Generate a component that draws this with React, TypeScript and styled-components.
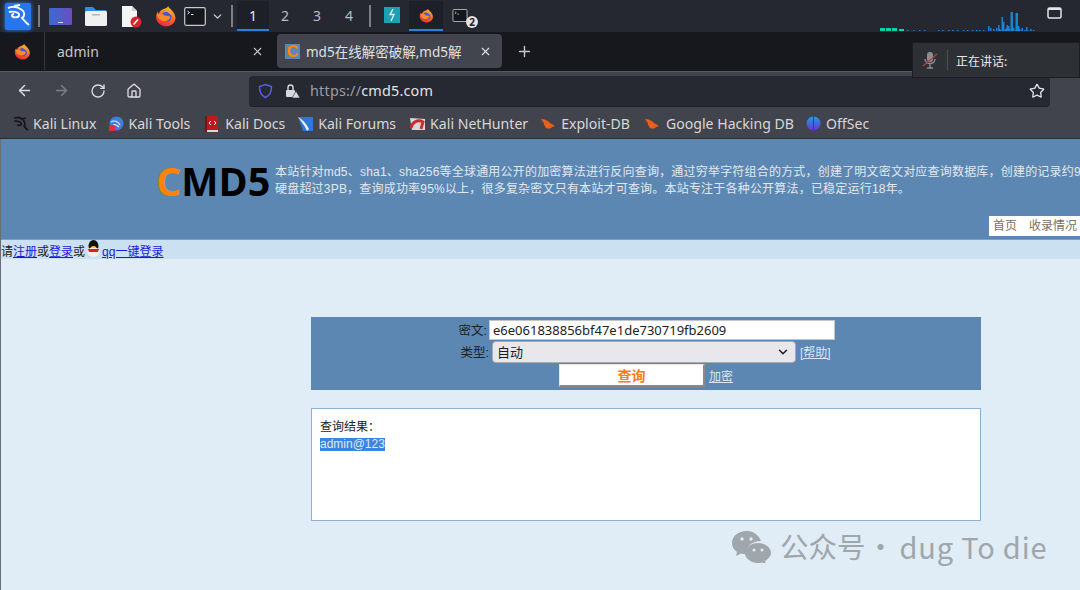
import React from 'react'
import styled, { createGlobalStyle } from 'styled-components'
import { ArrowLeft, ArrowRight, RotateCw, Home, Star, Plus, X, ChevronDown } from 'lucide-react'

const GlobalStyle = createGlobalStyle`
  html, body {
    margin: 0;
    padding: 0;
    width: 1080px;
    height: 590px;
    overflow: hidden;
    background: #e1edf6;
  }
  * { box-sizing: border-box; }
`

const cjk = `"Noto Sans CJK SC", sans-serif`
const ui = `"Noto Sans", "Noto Sans CJK SC", sans-serif`
const web = `"Liberation Sans", "Noto Sans CJK SC", sans-serif`

const introFirst =
  '本站针对md5、sha1、sha256等全球通用公开的加密算法进行反向查询\uFF0C通过穷举字符组合的方式\uFF0C创建了明文密文对应查询数据库\uFF0C创建的记录约9'
const introSecond =
  '硬盘超过3PB\uFF0C查询成功率95%以上\uFF0C很多复杂密文只有本站才可查询。本站专注于各种公开算法\uFF0C已稳定运行18年。'
const resultLabel = '查询结果\uFF1A'

const Screen = styled.div`
  position: relative;
  width: 1080px;
  height: 590px;
  overflow: hidden;
  display: flex;
  flex-direction: column;
`

// desktop panel
const Panel = styled.div`
  height: 32px;
  flex: none;
  background: #252831;
  display: flex;
  align-items: center;
  padding-left: 5px;
  color: #c9ccd2;
  font-family: ${ui};
`
const KaliLogo = styled.svg`
  flex: none;
  filter: drop-shadow(0 0 2px #2b7cf0);
`
const Sep = styled.div<{ $l: number; $r: number }>`
  width: 2px;
  height: 22px;
  background: #7b7e84;
  margin: 0 ${(p) => p.$r}px 0 ${(p) => p.$l}px;
  flex: none;
`
const Launcher = styled.div<{ $ml: number }>`
  margin-left: ${(p) => p.$ml}px;
  display: flex;
  align-items: center;
  flex: none;
`
const Workspace = styled.div<{ $active?: boolean }>`
  width: 32px;
  height: 30px;
  display: flex;
  align-items: center;
  justify-content: center;
  font-size: 14px;
  flex: none;
  color: ${(p) => (p.$active ? '#e6e8ec' : '#b9bcc3')};
  background: ${(p) => (p.$active ? '#1d2029' : 'transparent')};
  border-bottom: 2px solid ${(p) => (p.$active ? '#2f7fe0' : 'transparent')};
`
const WindowSlot = styled.div<{ $active?: boolean }>`
  position: relative;
  width: 34px;
  height: 30px;
  display: flex;
  align-items: center;
  justify-content: center;
  flex: none;
  background: ${(p) => (p.$active ? '#1d2029' : 'transparent')};
  border-bottom: 2px solid ${(p) => (p.$active ? '#2f7fe0' : 'transparent')};
`
const CountBadge = styled.span`
  position: absolute;
  right: -1px;
  bottom: 1px;
  width: 12px;
  height: 12px;
  border-radius: 50%;
  background: #e4e4e4;
  color: #20232b;
  font: bold 10px/12px ${ui};
  text-align: center;
`
const PanelRight = styled.div`
  margin-left: auto;
  display: flex;
  align-items: flex-start;
  height: 32px;
  padding-right: 18px;
  gap: 12px;
`
const Graph = styled.svg`
  margin-top: 11px;
  flex: none;
`
const ScreenIcon = styled.svg`
  margin-top: 7px;
  flex: none;
`

// browser tabs
const TabBar = styled.div`
  height: 39px;
  flex: none;
  background: #17181d;
  display: flex;
  align-items: center;
  padding-bottom: 1px;
  color: #c4c6cb;
  font-family: ${ui};
  font-size: 14px;
`
const FoxSlot = styled.div`
  width: 45px;
  height: 38px;
  display: flex;
  align-items: center;
  justify-content: center;
  border-right: 1px solid #33353b;
  flex: none;
`
const PlainTab = styled.div`
  width: 225px;
  height: 34px;
  padding: 0 6px 0 12px;
  display: flex;
  align-items: center;
  justify-content: space-between;
  flex: none;
`
const ActiveTab = styled(PlainTab)`
  margin-left: 7px;
  padding: 0 10px 0 8px;
  background: #42454e;
  border-radius: 4px;
  color: #dfe0e3;
  font-size: 13.5px;
`
const TabTitle = styled.span`
  flex: 1;
  margin-left: 6px;
  white-space: nowrap;
  overflow: hidden;
`
const Favicon = styled.span`
  width: 15px;
  height: 15px;
  background: #5b87b2;
  color: #ff8200;
  font: bold 16px/15px ${web};
  text-align: center;
  flex: none;
`
const NewTab = styled.div`
  margin-left: 14px;
  display: flex;
`

// toolbar
const NavBar = styled.div`
  height: 38px;
  flex: none;
  background: #41444d;
  border-top: 1px solid #55585f;
  display: flex;
  align-items: center;
  padding-left: 16px;
  color: #dcdde0;
`
const NavButton = styled.div<{ $w?: number }>`
  width: ${(p) => p.$w ?? 37}px;
  display: flex;
  flex: none;
`
const UrlBar = styled.div`
  width: 801px;
  height: 30px;
  margin-left: 88px;
  background: #262932;
  border-radius: 4px;
  box-shadow: 0 1px 0 #1f2127;
  display: flex;
  align-items: center;
  padding: 0 5px 0 9px;
  font-family: ${ui};
  font-size: 14.4px;
  color: #e2e3e6;
`
const Scheme = styled.span`
  color: #9b9da3;
`
const UrlText = styled.span`
  flex: 1;
  margin-left: 10px;
  letter-spacing: 0.2px;
`
const LockWrap = styled.span`
  margin-left: 11px;
  display: flex;
`

// bookmarks
const Bookmarks = styled.div`
  height: 30px;
  flex: none;
  background: #41444d;
  border-bottom: 1px solid #2a2c32;
  display: flex;
  align-items: center;
  padding-left: 13px;
  gap: 12px;
  color: #d6d7da;
  font-family: ${ui};
  font-size: 14.1px;
`
const Bookmark = styled.div<{ $gap?: number; $ml?: number }>`
  display: flex;
  align-items: center;
  gap: ${(p) => p.$gap ?? 4}px;
  margin-left: ${(p) => p.$ml ?? 0}px;
  white-space: nowrap;
`

// cmd5 page
const Page = styled.div`
  flex: 1;
  background: #e1edf6;
  border-left: 1px solid #6b6e74;
  font-family: ${web};
  font-size: 12px;
  color: #222;
  min-height: 0;
`
const Header = styled.div`
  height: 101px;
  background: #5b87b2;
  border-bottom: 1px solid #76a0c8;
  padding: 25px 0 0 155px;
  position: relative;
  overflow: hidden;
`
const Brand = styled.div`
  display: flex;
  align-items: flex-start;
`
const Logo = styled.div`
  font: bold 39.5px/38px "Open Sans", "Liberation Sans", sans-serif;
  color: #000;
  width: 119px;
  flex: none;
  margin-top: -2px;
  white-space: nowrap;
`
const LogoC = styled.span`
  color: #ff8200;
`
const Intro = styled.div`
  color: #e3e8ef;
  font-size: 12px;
  letter-spacing: 0.2px;
  line-height: 16.5px;
  white-space: nowrap;
`
const HeaderNav = styled.div`
  position: absolute;
  right: 0;
  top: 77px;
  width: 91px;
  height: 20px;
  background: #fff;
  color: #7a705f;
  font-size: 12px;
  line-height: 20px;
  padding-left: 4px;
  white-space: nowrap;
  overflow: hidden;
  display: flex;
  gap: 12px;
`
const LoginBar = styled.div`
  height: 19px;
  background: #cbe0f0;
  display: flex;
  align-items: flex-end;
  line-height: 14px;
  white-space: nowrap;
  position: relative;
`
const PageLink = styled.a`
  color: #1a1add;
  text-decoration: underline;
`
const Penguin = styled.svg`
  flex: none;
  margin: 0 1px 1px;
`
const Main = styled.div`
  margin: 58px 0 0 310px;
  width: 670px;
`
const QueryForm = styled.div`
  height: 73px;
  background: #5b87b2;
  padding-top: 2px;
  display: grid;
  grid-template-columns: 178px auto 1fr;
  grid-template-rows: 21px 23px 24px;
  align-items: center;
`
const FieldLabel = styled.div<{ $pr: number }>`
  text-align: right;
  padding-right: ${(p) => p.$pr}px;
  color: #1c1f24;
  font-size: 12.5px;
`
const HashInput = styled.input`
  width: 346px;
  height: 20px;
  border: 1px solid #c4c4c8;
  background: #fff;
  padding: 0 3px;
  font: 13px ${ui};
  color: #222;
  outline: none;
`
const TypeRow = styled.div`
  grid-column: 2 / 4;
  display: flex;
  align-items: center;
  padding-left: 3px;
`
const TypeSelect = styled.div`
  width: 304px;
  height: 22px;
  border: 1px solid #a9a9ae;
  border-radius: 4px;
  background: #e7e7ec;
  color: #1d1d1f;
  display: flex;
  align-items: center;
  justify-content: space-between;
  padding: 0 5px 0 4px;
  font: 13px ${cjk};
  flex: none;
`
const LightLink = styled.a`
  color: #dbe6f2;
  text-decoration: underline;
  margin-left: 4px;
  font-size: 12px;
`
const SubmitRow = styled.div`
  grid-column: 1 / 4;
  display: flex;
  align-items: center;
  padding-left: 248px;
`
const Submit = styled.div`
  width: 146px;
  height: 23px;
  background: #fff;
  border-style: solid;
  border-width: 1px 2px 2px 1px;
  border-color: #e8e8e8 #8a8a8a #8a8a8a #e8e8e8;
  color: #ff7a14;
  font: bold 14px/20px ${cjk};
  text-align: center;
`
const Result = styled.div`
  margin-top: 18px;
  height: 113px;
  background: #fff;
  border: 1px solid #8fb0d3;
  padding: 10px 8px;
  line-height: 17px;
  font-size: 12px;
`
const Selected = styled.span`
  background: #3b84e0;
  color: #dfeafa;
  display: inline-block;
  line-height: 13px;
  font-size: 12px;
`

// overlays
const Speaking = styled.div`
  position: absolute;
  left: 912px;
  top: 42px;
  width: 168px;
  height: 36px;
  background: #2d3035;
  border: 1px solid #1c1e23;
  display: flex;
  align-items: center;
  padding-left: 9px;
  color: #e6e6e8;
  font: 12px ${cjk};
`
const SpeakDivider = styled.div`
  width: 1px;
  height: 20px;
  background: #4a4d54;
  margin: 0 8px 0 9px;
`
const Watermark = styled.div`
  position: absolute;
  left: 731px;
  top: 528px;
  display: flex;
  align-items: center;
  gap: 8px;
  color: #9fa6ac;
  font: 28.5px/36px ${cjk};
  white-space: nowrap;
`
const WatermarkDot = styled.span`
  width: 30px;
  margin-left: -8px;
  margin-right: -4px;
  text-align: center;
`
const WatermarkName = styled.span`
  font-size: 29px;
  letter-spacing: 0.8px;
`

const FoxIcon = ({ size = 20 }: { size?: number }) => (
  <svg width={size} height={size} viewBox="0 0 20 20">
    <defs>
      <linearGradient id="fox" x1="0.7" y1="0" x2="0.3" y2="1">
        <stop offset="0" stopColor="#ffc02e" />
        <stop offset="0.5" stopColor="#ff6a2a" />
        <stop offset="1" stopColor="#e4263c" />
      </linearGradient>
    </defs>
    <path
      d="M12 1c0 1.500 1.500 2 3 3.500 3 3 4 6 3.500 8.500-.8 4-4.500 6.500-8.500 6.500C5 19.500 1 15.500 1 11c0-2 .5-3.500 1.500-5 0 1 .5 1.500 1 2 1-3 3-4 5-4.500C10 3 11.500 2.500 12 1z"
      fill="url(#fox)"
    />
    <circle cx="10.500" cy="10.500" r="4.700" fill="#4c55d8" />
    <path d="M2 9c2.500-2 5-1.500 6.500.5 2 .5 4.500 0 5.500 1.500-1 3-4 4.500-7 3.500C5 14 3 12 2 9z" fill="#ff8a26" />
    <path d="M9 5c3-.5 6 1.500 6.500 5-1.500-2-4-3.500-6.500-5z" fill="#ffa82e" />
  </svg>
)

const Terminal = ({ w, h }: { w: number; h: number }) => (
  <svg width={w} height={h} viewBox="0 0 22 19">
    <rect x=".7" y=".7" width="20.600" height="17.600" rx="1.500" fill="#15171c" stroke="#c9cbd0" strokeWidth="1.200" />
    <path d="M3.500 4l2 1.500-2 1.500M7 7.500h2.500" stroke="#e8e8e8" strokeWidth="1" fill="none" />
  </svg>
)

const Flame = () => (
  <svg width="16" height="12" viewBox="0 0 16 12">
    <path d="M1 1c4 0 7 2 9 4l5 3-3 1c-2 2-4 2-6 1C5 8 3 6 4 5 3 4 2 3 1 1z" fill="#e8601c" />
  </svg>
)

// net monitor bars: [x, height]
const teal: [number, number][] = [[0, 3], [6, 3], [12, 3], [19, 2]]
const blue: [number, number][] = [
  [27, 1], [33, 1], [39, 1], [44, 1], [58, 1], [62, 1], [68, 1], [72, 1], [77, 1], [83, 1], [87, 1], [92, 1],
  [96, 1], [99, 1], [103, 1], [108, 5], [110, 3], [113, 2], [116, 3], [119, 2], [123, 2], [126, 3], [129, 2],
  [132, 1], [135, 1], [139, 2], [141, 1], [144, 1], [147, 1], [150, 1], [153, 1],
  [118, 6], [122, 3], [125, 2], [119.500, 1],
  [130.500, 19], [131.500, 19], [135.500, 18], [136.500, 18],
  [121.500, 14], [123, 9], [126.500, 6], [128, 5], [133, 3], [138, 5], [141.500, 3], [146, 4], [150, 2],
]

export default function App() {
  return (
    <Screen>
      <GlobalStyle />
      <Panel>
        <KaliLogo width="26" height="27" viewBox="0 0 26 27">
          <rect width="26" height="27" rx="2" fill="#2876ee" />
          <path
            d="M3 5c5-2 10-1 14 2 3 2 3 6 0 8 2 2 4 5 7 7M4 9c4-1 9 0 10 2 1 3-3 4-6 3-2-1-1-3 1-3M9 3l6-1"
            stroke="#fff"
            strokeWidth="1.900"
            fill="none"
          />
        </KaliLogo>
        <Sep $l={7} $r={0} />
        <Launcher $ml={9}>
          <svg width="23" height="17" viewBox="0 0 23 17">
            <defs>
              <linearGradient id="desk" x1="0" y1="0" x2="1" y2="0">
                <stop offset="0" stopColor="#3a6bd0" />
                <stop offset="1" stopColor="#6a4fc0" />
              </linearGradient>
            </defs>
            <rect width="23" height="17" rx="1" fill="url(#desk)" />
            <rect x="9" y="14" width="5" height="1" fill="#cfd4ea" />
          </svg>
        </Launcher>
        <Launcher $ml={12}>
          <svg width="24" height="21" viewBox="0 0 24 21">
            <path d="M1 2a1 1 0 011-1h7l3 3h9a2 2 0 012 2H1z" fill="#2f8fe8" />
            <rect x="1" y="5" width="22" height="15" rx="1.500" fill="#f0f0f0" />
            <rect x="8" y="8" width="8" height="1.500" fill="#b5b5b5" />
          </svg>
        </Launcher>
        <Launcher $ml={13}>
          <svg width="21" height="23" viewBox="0 0 21 23">
            <path d="M1 1h10l5 5v16H1z" fill="#f4f4f4" />
            <path d="M11 1l5 5h-5z" fill="#cfcfcf" />
            <circle cx="15" cy="17" r="5.500" fill="#d8232a" />
            <path d="M12.500 19.500l4.500-5" stroke="#fff" strokeWidth="1.700" />
          </svg>
        </Launcher>
        <Launcher $ml={13}>
          <FoxIcon size={22} />
        </Launcher>
        <Launcher $ml={7}>
          <Terminal w={22} h={19} />
        </Launcher>
        <Launcher $ml={5}>
          <ChevronDown size={13} strokeWidth={2.500} />
        </Launcher>
        <Sep $l={7} $r={4} />
        <Workspace $active>1</Workspace>
        <Workspace>2</Workspace>
        <Workspace>3</Workspace>
        <Workspace>4</Workspace>
        <Sep $l={4} $r={4} />
        <WindowSlot>
          <svg width="16" height="16" viewBox="0 0 16 16">
            <rect width="16" height="16" fill="#1ba0b4" />
            <path d="M9 2L6 7.500h4L7 14" stroke="#e8f6f6" strokeWidth="1.300" fill="none" />
          </svg>
        </WindowSlot>
        <WindowSlot $active>
          <FoxIcon size={15} />
        </WindowSlot>
        <WindowSlot>
          <Terminal w={16} h={13} />
          <CountBadge>2</CountBadge>
        </WindowSlot>
        <PanelRight>
          <Graph width="155" height="20" viewBox="0 0 155 20">
            {teal.map(([x, h]) => (
              <rect key={x} x={x} y={20 - h} width="5" height={h} fill="#00d6b0" />
            ))}
            {blue.map(([x, h]) => (
              <rect key={x} x={x} y={20 - h} width="1.500" height={h} fill={h > 10 ? '#1a86c8' : '#1b7fe0'} />
            ))}
          </Graph>
          <ScreenIcon width="15" height="13" viewBox="0 0 15 13">
            <rect x="1" y="1" width="13" height="10" rx="1.500" fill="#262932" stroke="#e4e4e4" strokeWidth="1.500" />
            <rect x="1" y="1" width="13" height="2" fill="#e4e4e4" />
          </ScreenIcon>
        </PanelRight>
      </Panel>

      <TabBar>
        <FoxSlot>
          <FoxIcon size={17} />
        </FoxSlot>
        <PlainTab>
          admin
          <X size={13} />
        </PlainTab>
        <ActiveTab>
          <Favicon>C</Favicon>
          <TabTitle>md5在线解密破解,md5解</TabTitle>
          <X size={13} />
        </ActiveTab>
        <NewTab>
          <Plus size={17} />
        </NewTab>
      </TabBar>

      <NavBar>
        <NavButton><ArrowLeft size={17} /></NavButton>
        <NavButton><ArrowRight size={17} color="#7d7f85" /></NavButton>
        <NavButton $w={36}><RotateCw size={16} /></NavButton>
        <NavButton $w={35}><Home size={16} /></NavButton>
        <UrlBar>
          <svg width="15" height="16" viewBox="0 0 15 16" fill="none" style={{ flex: 'none' }}>
            <path d="M7.500 1.500l6 2c0 5-1 9-6 11-5-2-6-6-6-11z" stroke="#5a5fe0" strokeWidth="1.400" />
          </svg>
          <LockWrap>
            <svg width="16" height="16" viewBox="0 0 16 16" fill="none">
              <rect x="2" y="7" width="9" height="7" rx="1" fill="#d8d9dc" />
              <path d="M4 7V4.500a2.500 2.500 0 015 0V7" stroke="#d8d9dc" strokeWidth="1.400" />
              <path d="M12 8l4 7H8z" fill="#d8d9dc" stroke="#262932" strokeWidth=".6" />
            </svg>
          </LockWrap>
          <UrlText><Scheme>https://</Scheme>cmd5.com</UrlText>
          <Star size={16} />
        </UrlBar>
      </NavBar>

      <Bookmarks>
        <Bookmark>
          <svg width="16" height="16" viewBox="0 0 16 16" fill="none">
            <path d="M1 2c4-1 8 0 10 3 1 2 1 4 0 5 1 1 2 3 4 4M1 5c3 0 6 0 7 2 1 2-1 3-4 2M9 3l4-1" stroke="#141519" strokeWidth="1.700" />
          </svg>
          Kali Linux
        </Bookmark>
        <Bookmark>
          <svg width="16" height="16" viewBox="0 0 16 16">
            <circle cx="8.500" cy="7.500" r="7" fill="#3f7fd8" />
            <path d="M3 6c3-2 7-1 9 3M5 9c2-1 4 0 6 2" stroke="#e8edf6" strokeWidth="1.200" fill="none" />
            <rect x="1" y="9" width="6" height="6" rx="1.500" fill="#e03030" />
          </svg>
          Kali Tools
        </Bookmark>
        <Bookmark $gap={6} $ml={3}>
          <svg width="14" height="16" viewBox="0 0 14 16">
            <rect x="1" y="0" width="12" height="14" fill="#b81c22" />
            <rect x="1" y="14" width="12" height="2" fill="#d8d8d8" />
            <rect x="0" y="0" width="2" height="16" fill="#7c1015" />
            <path d="M6 5L4 7l2 2M9 5l2 2-2 2" stroke="#fff" strokeWidth="1" fill="none" />
          </svg>
          Kali Docs
        </Bookmark>
        <Bookmark>
          <svg width="17" height="16" viewBox="0 0 17 16">
            <path d="M1 1h15v14H6z" fill="#2c78dc" />
            <path d="M1 1c4 2 8 6 11 12l-2 2C8 10 4 5 1 1z" fill="#f0f0f0" />
          </svg>
          Kali Forums
        </Bookmark>
        <Bookmark $ml={1}>
          <svg width="17" height="16" viewBox="0 0 17 16" fill="none">
            <path d="M1 2l15 1v11H3z" fill="#d8d8dc" />
            <path d="M2 12C3 6 9 3 14 6l-2 7" stroke="#cf2a2a" strokeWidth="2.800" />
          </svg>
          Kali NetHunter
        </Bookmark>
        <Bookmark $gap={5}><Flame />Exploit-DB</Bookmark>
        <Bookmark $gap={6} $ml={2}><Flame />Google Hacking DB</Bookmark>
        <Bookmark $gap={5}>
          <svg width="15" height="15" viewBox="0 0 15 15">
            <defs>
              <linearGradient id="off" x1="0" y1="0" x2="0" y2="1">
                <stop offset="0" stopColor="#20a0e0" />
                <stop offset="1" stopColor="#6a30d0" />
              </linearGradient>
            </defs>
            <circle cx="7.500" cy="7.500" r="7" fill="url(#off)" />
            <rect x="7" y="0" width="1" height="15" fill="#41444d" />
          </svg>
          OffSec
        </Bookmark>
      </Bookmarks>

      <Page>
        <Header>
          <Brand>
            <Logo><LogoC>C</LogoC>MD5</Logo>
            <Intro>
              {introFirst}
              <br />
              {introSecond}
            </Intro>
          </Brand>
          <HeaderNav><span>首页</span><span>收录情况</span></HeaderNav>
        </Header>
        <LoginBar>
          请<PageLink>注册</PageLink>或<PageLink>登录</PageLink>或
          <Penguin width="15" height="18" viewBox="0 0 15 18">
            <ellipse cx="7.500" cy="6" rx="5" ry="6" fill="#111" />
            <ellipse cx="7.500" cy="12" rx="6" ry="5" fill="#f4f0e4" />
            <path d="M2 9h11l-1 3H3z" fill="#e02020" />
            <path d="M5 6h5l-2.500 2z" fill="#f0b020" />
          </Penguin>
          <PageLink>qq一键登录</PageLink>
        </LoginBar>
        <Main>
          <QueryForm>
            <FieldLabel $pr={2}>密文:</FieldLabel>
            <HashInput readOnly value="e6e061838856bf47e1de730719fb2609" />
            <span />
            <FieldLabel $pr={0}>类型:</FieldLabel>
            <TypeRow>
              <TypeSelect>
                自动
                <ChevronDown size={14} strokeWidth={2.500} />
              </TypeSelect>
              <LightLink>[帮助]</LightLink>
            </TypeRow>
            <SubmitRow>
              <Submit>查询</Submit>
              <LightLink>加密</LightLink>
            </SubmitRow>
          </QueryForm>
          <Result>
            {resultLabel}
            <br />
            <Selected>admin@123</Selected>
          </Result>
        </Main>
      </Page>

      <Speaking>
        <svg width="16" height="18" viewBox="0 0 16 18" fill="none">
          <rect x="5" y="1" width="6" height="10" rx="3" fill="#8c8e92" />
          <path d="M3 8c0 6 10 6 10 0M8 13v4M5 17h6" stroke="#8c8e92" strokeWidth="1.400" />
          <path d="M1 15L15 3" stroke="#b8403c" strokeWidth="1.300" />
        </svg>
        <SpeakDivider />
        正在讲话:
      </Speaking>
      <Watermark>
        <svg width="41" height="33" viewBox="0 0 41 33">
          <path d="M16 1C7 1 1 6.500 1 13c0 4 2 7 5 9l-1 4 5-2.500c1.500.5 3 .7 4.500.7C14 18 20 11 30 11 28 5.500 23 1 16 1z" fill="#9fa6ac" />
          <path d="M27 13c-7 0-13 4.500-13 10s6 10 13 10c1.500 0 2.500-.2 4-.6l4 2.100-1-3.500c3-2 6-4.500 6-8 0-5.500-6-10-13-10z" fill="#9fa6ac" />
          <circle cx="11" cy="9" r="1.700" fill="#e1edf6" />
          <circle cx="20" cy="9" r="1.700" fill="#e1edf6" />
          <circle cx="23" cy="20" r="1.500" fill="#e1edf6" />
          <circle cx="31" cy="20" r="1.500" fill="#e1edf6" />
        </svg>
        <span>公众号</span>
        <WatermarkDot>·</WatermarkDot>
        <WatermarkName>dug To die</WatermarkName>
      </Watermark>
    </Screen>
  )
}
